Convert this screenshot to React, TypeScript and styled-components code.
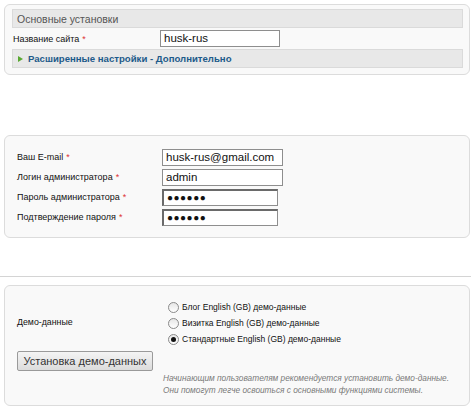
import React from "react";
import styled, { createGlobalStyle } from "styled-components";

const Global = createGlobalStyle`
  html, body { margin: 0; padding: 0; background: #ffffff; }
  body { font-family: "Liberation Sans", Arial, sans-serif; color: #222; }
  * { box-sizing: border-box; }
`;

const Page = styled.div`
  width: 474px;
  height: 412px;
  padding: 4px 4px 0 4px;
  display: flex;
  flex-direction: column;
  overflow: hidden;
`;

const Panel = styled.div<{ $mt?: number; $pt?: number; $h?: number }>`
  margin-top: ${(p) => p.$mt ?? 0}px;
  width: 466px;
  height: ${(p) => p.$h}px;
  background: #f9f9f9;
  border: 1px solid #dcdcdc;
  border-radius: 6px;
  padding: ${(p) => p.$pt ?? 5}px 6px 0 7px;
`;

const Bar = styled.div`
  height: 19px;
  background: #e8e8e8;
  border: 1px solid #dadada;
  display: flex;
  align-items: center;
  padding-left: 4px;
  font-size: 10.5px;
  color: #555;
  white-space: nowrap;
`;

const LinkBar = styled(Bar)`
  padding-left: 5px;
  gap: 5px;
  font-weight: bold;
  font-size: 9.6px;
  color: #1d5a8a;
`;

const Triangle = styled.span`
  width: 0;
  height: 0;
  border-top: 3.5px solid transparent;
  border-bottom: 3.5px solid transparent;
  border-left: 5px solid #5aa832;
`;

const Row = styled.div<{ $label: number; $h: number }>`
  display: grid;
  grid-template-columns: ${(p) => p.$label}px 1fr;
  align-items: center;
  height: ${(p) => p.$h}px;
`;

const Label = styled.span<{ $pl?: number }>`
  font-size: 9px;
  color: #111;
  padding-left: ${(p) => p.$pl ?? 0}px;
  white-space: nowrap;
`;

const Star = styled.span`
  color: #d33;
  margin-left: 3px;
`;

const Input = styled.div<{ $w: number; $pw?: boolean }>`
  width: ${(p) => p.$w}px;
  height: 17px;
  background: #fff;
  border: 1px solid #8e8e8e;
  ${(p) => (p.$pw ? "border-top: 2px solid #6a6a6a; border-left: 2px solid #6a6a6a;" : "")}
  font-family: "Liberation Sans", Arial, sans-serif;
  font-size: 11.5px;
  color: #111;
  display: flex;
  align-items: center;
  padding-left: 3px;
  padding-top: 1px;
  line-height: 1;
  white-space: nowrap;
  overflow: hidden;
`;

const Dots = styled.span`
  font-size: 10px;
  letter-spacing: 0.5px;
  font-weight: bold;
`;

const Fields = styled.div`
  display: flex;
  flex-direction: column;
`;

const Rule = styled.div`
  margin: 38px -4px 0 -4px;
  width: 471px;
  height: 1px;
  background: #d4d4d4;
`;

const DemoGrid = styled.div`
  display: grid;
  grid-template-columns: 150px 1fr;
`;

const LeftCol = styled.div`
  display: flex;
  flex-direction: column;
`;

const DemoLabel = styled.div`
  height: 57px;
  display: flex;
  align-items: center;
  padding-left: 5px;
  padding-top: 14px;
  font-size: 8.8px;
  color: #111;
`;

const Button = styled.div`
  margin-top: 8px;
  margin-left: 5px;
  width: 136px;
  height: 20px;
  border: 1px solid #9a9a9a;
  border-radius: 2px;
  background: linear-gradient(#f4f4f4, #dcdcdc);
  display: flex;
  align-items: center;
  justify-content: center;
  font-size: 11px;
  color: #333;
  white-space: nowrap;
`;

const RightCol = styled.div`
  display: flex;
  flex-direction: column;
  padding-top: 13px;
`;

const RadioRow = styled.div`
  display: flex;
  align-items: center;
  gap: 3px;
  height: 16px;
  padding-left: 6px;
  font-size: 8.5px;
  color: #111;
  white-space: nowrap;
`;

const Radio = styled.span<{ $on?: boolean }>`
  width: 11px;
  height: 11px;
  border-radius: 50%;
  border: 1px solid #8a8a8a;
  background: linear-gradient(#e6e6e6, #ffffff);
  display: flex;
  align-items: center;
  justify-content: center;
  &::after {
    content: "";
    display: ${(p) => (p.$on ? "block" : "none")};
    width: 5px;
    height: 5px;
    border-radius: 50%;
    background: #111;
  }
`;

const Note = styled.div`
  margin-top: 26px;
  margin-left: 1px;
  font-size: 8.3px;
  font-style: italic;
  color: #7a7a7a;
  line-height: 11.5px;
  white-space: nowrap;
`;

export default function App() {
  return (
    <>
      <Global />
      <Page>
        <Panel $h={71} $pt={4}>
          <Bar>Основные установки</Bar>
          <Row $label={148} $h={21}>
            <Label $pl={1}>
              Название сайта<Star>*</Star>
            </Label>
            <Input $w={120}>husk-rus</Input>
          </Row>
          <LinkBar>
            <Triangle />
            Расширенные настройки - Дополнительно
          </LinkBar>
        </Panel>

        <Panel $mt={60} $h={103} $pt={11}>
          <Fields>
            <Row $label={150} $h={20}>
              <Label $pl={5}>
                Ваш E-mail<Star>*</Star>
              </Label>
              <Input $w={121}>husk-rus@gmail.com</Input>
            </Row>
            <Row $label={150} $h={20}>
              <Label $pl={5}>
                Логин администратора<Star>*</Star>
              </Label>
              <Input $w={121}>admin</Input>
            </Row>
            <Row $label={150} $h={20}>
              <Label $pl={5}>
                Пароль администратора<Star>*</Star>
              </Label>
              <Input $w={116} $pw>
                <Dots>●●●●●●</Dots>
              </Input>
            </Row>
            <Row $label={150} $h={20}>
              <Label $pl={5}>
                Подтверждение пароля<Star>*</Star>
              </Label>
              <Input $w={116} $pw>
                <Dots>●●●●●●</Dots>
              </Input>
            </Row>
          </Fields>
        </Panel>

        <Rule />

        <Panel $mt={8} $h={121} $pt={0}>
          <DemoGrid>
            <LeftCol>
              <DemoLabel>Демо-данные</DemoLabel>
              <Button>Установка демо-данных</Button>
            </LeftCol>
            <RightCol>
              <RadioRow>
                <Radio />
                Блог English (GB) демо-данные
              </RadioRow>
              <RadioRow>
                <Radio />
                Визитка English (GB) демо-данные
              </RadioRow>
              <RadioRow>
                <Radio $on />
                Стандартные English (GB) демо-данные
              </RadioRow>
              <Note>
                Начинающим пользователям рекомендуется установить демо-данные.
                <br />
                Они помогут легче освоиться с основными функциями системы.
              </Note>
            </RightCol>
          </DemoGrid>
        </Panel>
      </Page>
    </>
  );
}
